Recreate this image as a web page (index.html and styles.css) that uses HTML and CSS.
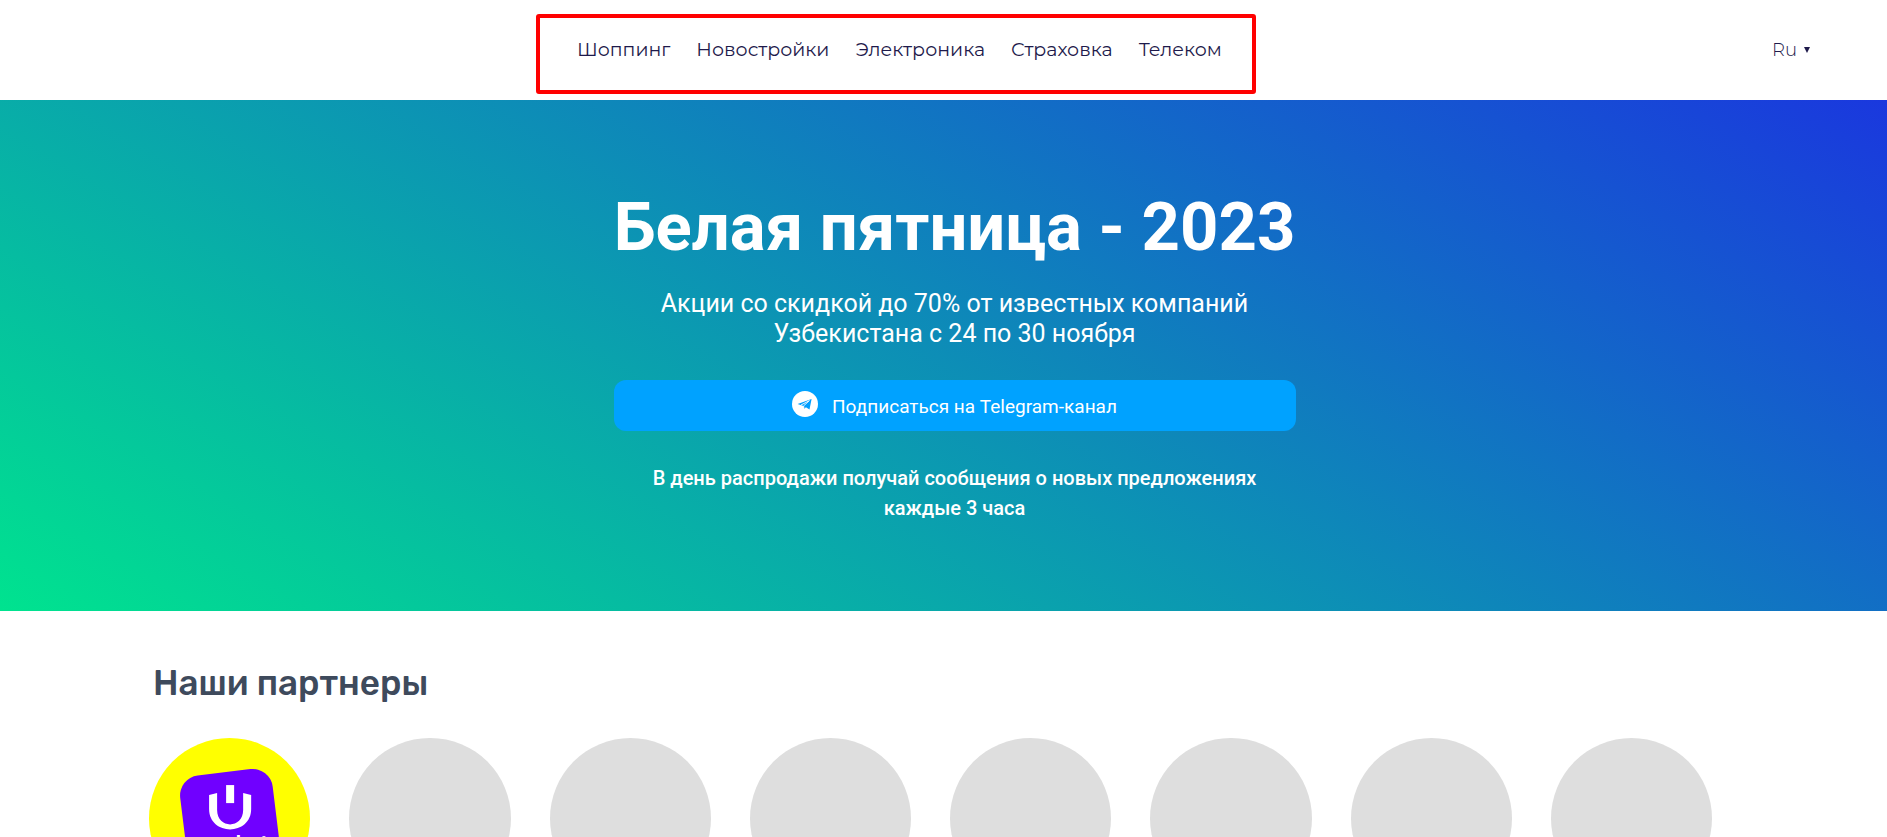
FILE: index.html
```html
<!DOCTYPE html>
<html lang="ru">
<head>
    <meta charset="UTF-8">
    <meta name="viewport" content="width=device-width, initial-scale=1.0">
    <title>Белая пятница - 2023</title>
    <link rel="stylesheet" href="styles.css">
</head>
<body>

    <header class="header">
        <nav class="nav">
            <a href="#">Шоппинг</a>
            <a href="#">Новостройки</a>
            <a href="#">Электроника</a>
            <a href="#">Страховка</a>
            <a href="#">Телеком</a>
        </nav>
        <button class="lang" type="button">Ru <span class="arrow"></span></button>
    </header>

    <section class="hero">
        <div class="hero-content">
            <h1>Белая пятница - 2023</h1>
            <p class="subtitle">Акции со скидкой до 70% от известных компаний Узбекистана с 24 по 30 ноября</p>
            <a class="btn" href="#">
                <svg class="btn-icon" viewBox="0 0 26 26">
                    <circle cx="13" cy="13" r="13" fill="#fff"/>
                    <path d="M5.6 13.1 L19.6 8 L17.5 18.6 L13.9 16.3 L12.1 18.1 L11.5 14.9 Z" fill="#009fff"/>
                    <path d="M9 14 L17.4 9.6 L11.6 14.9 L12.1 18.1" fill="none" stroke="#fff" stroke-width=".9"/>
                </svg>
                <span class="btn-text">Подписаться на Telegram-канал</span>
            </a>
            <p class="note">В день распродажи получай сообщения о новых предложениях каждые 3 часа</p>
        </div>
    </section>

    <section class="partners">
        <h2>Наши партнеры</h2>
        <div class="partners-list">
            <a href="#" class="partner uzum" aria-label="Uzum Market">
                <svg viewBox="0 0 161 161">
                    <rect x="34" y="34" width="93" height="93" rx="20" fill="#7000ff" transform="rotate(-7 80 80)"/>
                    <rect x="77" y="47" width="8" height="18" fill="#fff"/>
                    <path d="M60 57 L68 55 V72 C68 91 94 91 94 72 V55 L102 57 V71 C102 98 60 98 60 71 Z" fill="#fff"/>
                    <text x="82" y="113" text-anchor="middle" class="uzum-text">market</text>
                </svg>
            </a>
            <a href="#" class="partner"></a>
            <a href="#" class="partner"></a>
            <a href="#" class="partner"></a>
            <a href="#" class="partner"></a>
            <a href="#" class="partner"></a>
            <a href="#" class="partner"></a>
            <a href="#" class="partner"></a>
        </div>
    </section>

</body>
</html>
```
FILE: styles.css
```css
*{
    margin: 0;
    padding: 0;
    box-sizing: border-box;
}
html{
    scrollbar-width: none;
}
body{
    font-family: Roboto, "Liberation Sans", sans-serif;
    background-color: #fff;
}
a{
    color: inherit;
    text-decoration: none;
}
.header{
    display: flex;
    justify-content: space-between;
    align-items: flex-start;
    padding: 14px 77px 6px 28.4%;
    font-family: Montserrat, Inter, sans-serif;
    color: #1e1a4b;
}
.nav{
    display: flex;
    gap: 26px;
    padding: 19px 30px 28px 37px;
    border: 4px solid #ff0000;
    border-radius: 3px;
    font-size: 19px;
    line-height: 25px;
}
.lang{
    display: flex;
    align-items: center;
    gap: 7px;
    margin-top: 24px;
    border: none;
    background: none;
    font-family: inherit;
    font-size: 18px;
    font-weight: 300;
    line-height: 24px;
    color: #1e1a4b;
}
.arrow{
    border: 3px solid transparent;
    border-top: 6px solid #1e1a4b;
    border-bottom: none;
}
.hero{
    padding: 92px 0 88px 22px;
    background: linear-gradient(30deg, #00e38f, #1a38de);
    color: #fff;
    text-align: center;
}
.hero-content{
    max-width: 682px;
    margin: 0 auto;
}
h1{
    font-size: 67px;
    line-height: 70px;
    white-space: nowrap;
}
.subtitle{
    margin: 27px 40px 31px;
    font-size: 25px;
    line-height: 30px;
}
.btn{
    display: flex;
    justify-content: center;
    align-items: center;
    gap: 14px;
    height: 51px;
    border-radius: 12px;
    background-color: #00a2ff;
    font-size: 19px;
}
.btn-icon{
    width: 26px;
    height: 26px;
    margin-bottom: 4px;
}
.btn-text{
    padding-top: 2px;
}
.note{
    margin: 32px 30px 0;
    font-size: 20px;
    font-weight: 500;
    line-height: 30px;
}
.partners{
    padding: 50px 175px 0 149px;
}
h2{
    padding-left: 4px;
    font-family: Rubik, Inter, sans-serif;
    font-size: 35px;
    font-weight: 500;
    line-height: 44px;
    color: #3e4a5c;
}
.partners-list{
    display: grid;
    grid-template-columns: repeat(8, 1fr);
    gap: 39px;
    margin-top: 33px;
}
.partner{
    aspect-ratio: 1;
    border-radius: 50%;
    background-color: #dedede;
}
.uzum{
    background-color: #ffff00;
}
.uzum svg{
    display: block;
}
.uzum-text{
    font-family: Inter, sans-serif;
    font-size: 22px;
    font-weight: 600;
    fill: #fff;
}
```
